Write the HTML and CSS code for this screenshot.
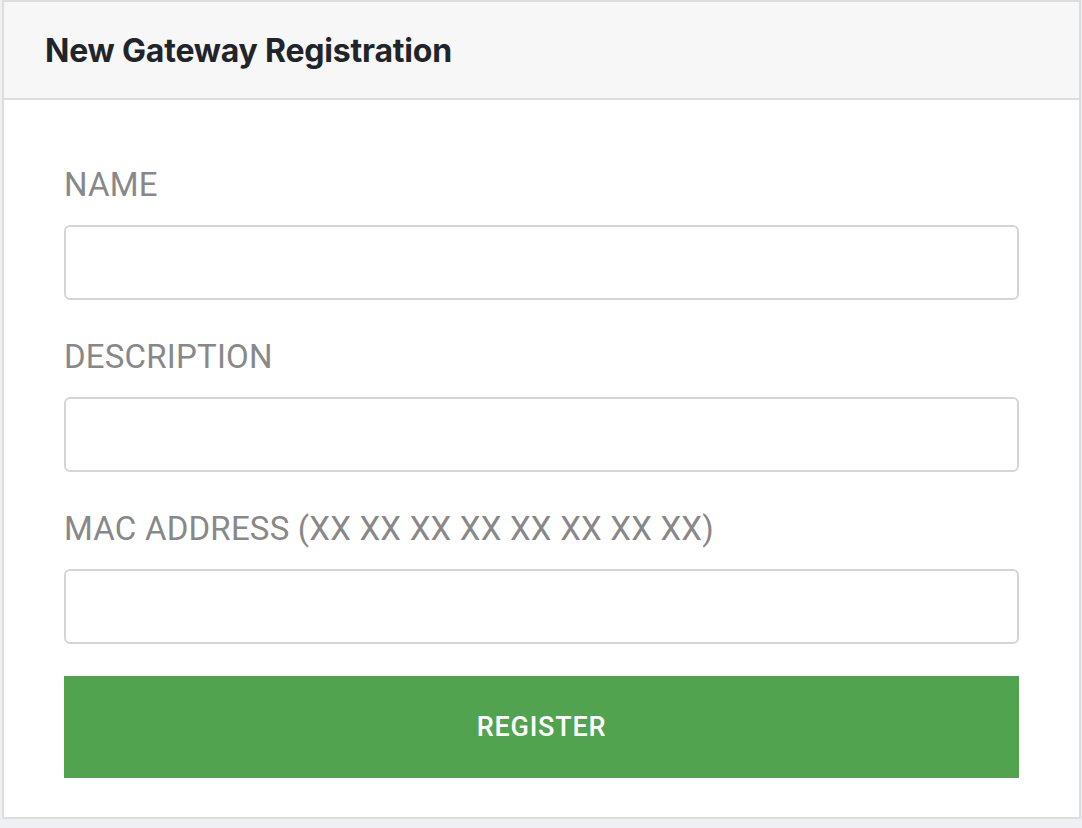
FILE: index.html
```html
<!DOCTYPE html>
<html>
<head>
<meta charset="utf-8">
<link rel="stylesheet" href="styles.css">
</head>
<body>
<div class="card">
  <div class="card-header">
    <h1 class="title">New Gateway Registration</h1>
  </div>
  <form class="card-body">
    <label class="label">NAME</label>
    <input class="input" type="text">
    <label class="label">DESCRIPTION</label>
    <input class="input" type="text">
    <label class="label">MAC ADDRESS (XX XX XX XX XX XX XX XX)</label>
    <input class="input input-last" type="text">
    <button class="btn" type="button">REGISTER</button>
  </form>
</div>
</body>
</html>
```
FILE: styles.css
```css
html, body {
  margin: 0;
  padding: 0;
  background: #eff0f4;
}
body {
  padding: 0 1px 0 2px;
  height: 828px;
  box-sizing: border-box;
}
.card {
  background: #fff;
  border: 2px solid #dddddd;
  height: 819px;
  box-sizing: border-box;
}
.card-header {
  background: #f7f7f7;
  border-bottom: 2px solid #dddddd;
  height: 98px;
  box-sizing: border-box;
  display: flex;
  align-items: center;
  padding: 0 0 0 41px;
}
.title {
  margin: 0;
  font-family: Inter, "Liberation Sans", sans-serif;
  font-weight: 700;
  font-size: 32px;
  color: #212529;
  letter-spacing: -0.2px;
}
.card-body {
  display: flex;
  flex-direction: column;
  padding: 65px 60px 0 60px;
}
.label {
  font-family: Roboto, "Liberation Sans", sans-serif;
  font-size: 33px;
  color: #888888;
  line-height: 40px;
  letter-spacing: 0.2px;
  margin-bottom: 20px;
}
.input {
  height: 75px;
  box-sizing: border-box;
  border: 2px solid #d3d5d9;
  border-radius: 6px;
  margin: 0 0 37px 0;
  width: 100%;
}
.input-last { margin-bottom: 32px; }
.btn {
  height: 102px;
  border: none;
  background: #52a350;
  color: #fff;
  font-family: Roboto, "Liberation Sans", sans-serif;
  font-size: 27px;
  font-weight: 500;
  letter-spacing: 0.8px;
}
```
